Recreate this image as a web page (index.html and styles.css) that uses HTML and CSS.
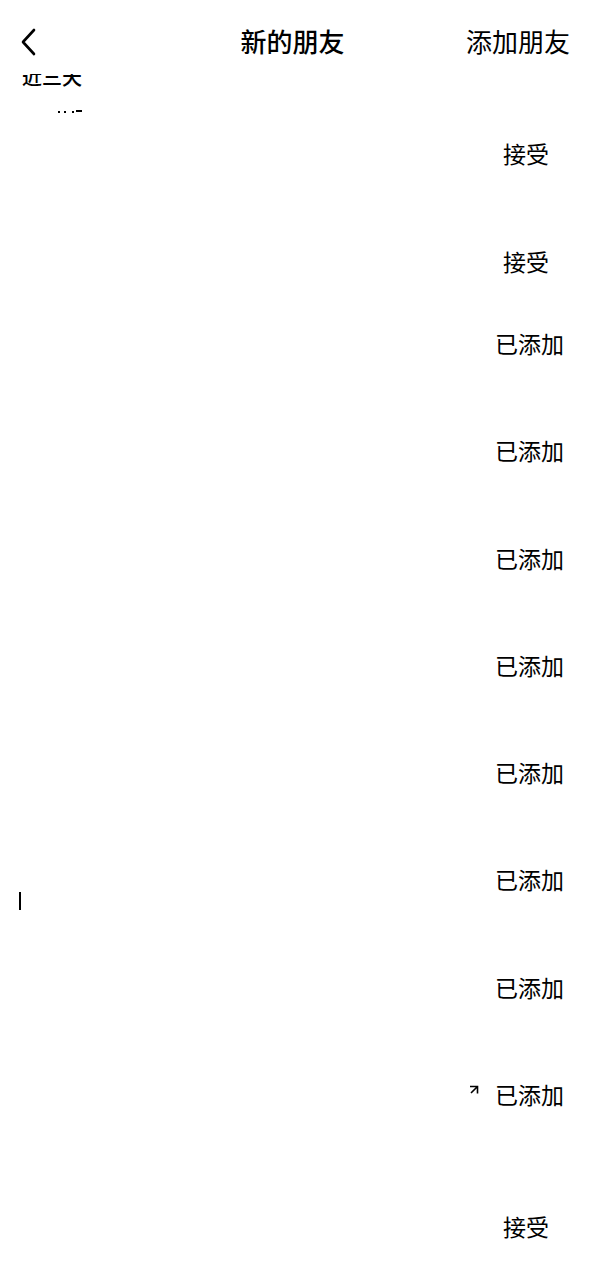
FILE: index.html
```html
<!DOCTYPE html>
<html lang="zh-CN">
<head>
<meta charset="utf-8">
<title>新的朋友</title>
<link rel="stylesheet" href="styles.css">
</head>
<body>
<div class="page">
  <header class="header">
    <div class="header-left">
      <svg class="back" width="18" height="28" viewBox="0 0 18 28"><path d="M15 2 L4 14 L15 26" fill="none" stroke="#000" stroke-width="2.6" stroke-linecap="round" stroke-linejoin="round"/></svg>
    </div>
    <div class="title">新的朋友</div>
    <div class="header-right"><span class="add">添加朋友</span></div>
  </header>
  <div class="section-label"><span>近三天</span></div>
  <ul class="list">
    <li class="row">
      <div class="left"><svg class="dots" width="26" height="4" viewBox="0 0 26 4"><rect x="0" y="1" width="2" height="2" fill="#000"/><rect x="6" y="1" width="2" height="2" fill="#000"/><rect x="14" y="1" width="2" height="2" fill="#000"/><rect x="18" y="0" width="6" height="2" fill="#000"/></svg></div>
      <span class="btn accept">接受</span>
    </li>
    <li class="row">
      <div class="left"></div>
      <span class="btn accept">接受</span>
    </li>
    <li class="row"><div class="left"></div><span class="btn added">已添加</span></li>
    <li class="row"><div class="left"></div><span class="btn added">已添加</span></li>
    <li class="row"><div class="left"></div><span class="btn added">已添加</span></li>
    <li class="row"><div class="left"></div><span class="btn added">已添加</span></li>
    <li class="row"><div class="left"></div><span class="btn added">已添加</span></li>
    <li class="row"><div class="left"><span class="caret"></span></div><span class="btn added">已添加</span></li>
    <li class="row"><div class="left"></div><span class="btn added">已添加</span></li>
    <li class="row">
      <div class="left"></div>
      <svg class="arrow" width="11" height="11" viewBox="0 0 11 11"><path d="M2 1.5 H9.5 V8.5 M9.5 1.5 L3 8" fill="none" stroke="#000" stroke-width="1.6"/></svg>
      <span class="btn added">已添加</span>
    </li>
    <li class="row">
      <div class="left"></div>
      <span class="btn accept">接受</span>
    </li>
  </ul>
</div>
</body>
</html>
```

FILE: styles.css
```css
html, body {
  margin: 0;
  padding: 0;
  background: #fff;
}
body {
  font-family: "Noto Sans CJK SC", "Noto Sans", sans-serif;
  color: #000;
}
.page {
  width: 593px;
  min-height: 1280px;
  overflow: hidden;
}
.header {
  position: relative;
  z-index: 2;
  height: 74px;
  box-sizing: border-box;
  padding: 28px 23px 0 19px;
  display: grid;
  grid-template-columns: 1fr auto 1fr;
  align-items: start;
  background: #fff;
}
.header-left {
  display: flex;
  align-items: center;
  height: 26px;
}
.back {
  display: block;
  margin-top: 1px;
}
.title {
  font-size: 26px;
  line-height: 26px;
  font-weight: 500;
  margin-left: -4px;
}
.header-right {
  display: flex;
  justify-content: flex-end;
}
.add {
  font-size: 26px;
  line-height: 26px;
}
.section-label {
  position: relative;
  z-index: 1;
  height: 13px;
  overflow: hidden;
  padding-left: 22px;
}
.section-label span {
  display: block;
  font-size: 20px;
  line-height: 20px;
  margin-top: -7px;
  font-weight: 500;
}
.list {
  list-style: none;
  margin: -12.3px 0 0 0;
  padding: 0;
}
.row {
  height: 107.3px;
  display: flex;
  align-items: center;
  padding: 0 29px 0 19px;
}
.left {
  flex: 1;
  display: flex;
  align-items: center;
}
.btn {
  font-size: 23px;
  line-height: 24px;
}
.accept {
  margin-top: 50px;
  margin-right: 15px;
}
.dots {
  display: block;
  margin-left: 39px;
  margin-top: -32px;
}
.caret {
  display: block;
  width: 2px;
  height: 18px;
  background: #000;
  margin-top: 44px;
}
.arrow {
  display: block;
  margin-right: 16px;
  margin-top: -8px;
}
```
